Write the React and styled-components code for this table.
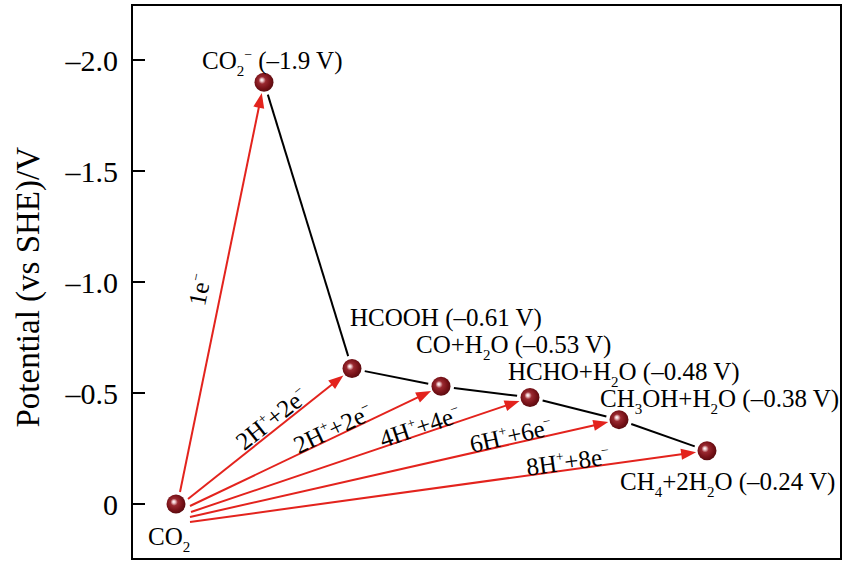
import styled, { createGlobalStyle } from 'styled-components';

const GlobalStyle = createGlobalStyle`
  html, body {
    margin: 0;
    padding: 0;
    background: #ffffff;
  }
`;

const Figure = styled.div`
  display: flex;
  width: 863px;
  height: 566px;
  background: #fff;
  font-family: 'Liberation Serif', 'Times New Roman', serif;
  color: #000;
`;

const AxisTitle = styled.div`
  width: 56px;
  display: flex;
  align-items: center;
  justify-content: center;
  padding-top: 8px;
  box-sizing: border-box;

  span {
    writing-mode: vertical-rl;
    transform: rotate(180deg);
    font-size: 33px;
    line-height: 1;
    white-space: nowrap;
  }
`;

const Chart = styled.svg`
  display: block;
  flex: none;
  font-family: 'Liberation Serif', 'Times New Roman', serif;
`;

const TickLabel = styled.text`
  font-size: 30px;
  fill: #000;
  text-anchor: end;
`;

const Annotation = styled.text`
  font-size: 25px;
  fill: #000;
`;

const StepLabel = styled.text`
  font-size: 25px;
  fill: #000;
  text-anchor: middle;
`;

const RED = '#e3231d';
const R = 9.5;

const y = (v) => 504 + v * 222;

const ticks = [0, -0.5, -1.0, -1.5, -2.0];

const species = {
  co2: { x: 176, v: 0 },
  co2r: { x: 264, v: -1.9 },
  hcooh: { x: 352, v: -0.61 },
  co: { x: 441, v: -0.53 },
  hcho: { x: 530, v: -0.48 },
  ch3oh: { x: 619, v: -0.38 },
  ch4: { x: 707, v: -0.24 },
};

const electrons = (n) => [[`${n}H`], ['+', 'sup'], [`+${n}e`], ['−', 'sup']];

// arrows out of CO2, each with its own start point and label centre
const steps = [
  { to: 'co2r', from: [180, 492], label: [['1e'], ['−', 'sup']], center: [200, 290] },
  { to: 'hcooh', from: [188, 499], label: electrons(2), center: [272, 419] },
  { to: 'co', from: [190, 506], label: electrons(2), center: [333, 429] },
  { to: 'hcho', from: [191, 512], label: electrons(4), center: [420, 427] },
  { to: 'ch3oh', from: [190, 517], label: electrons(6), center: [511, 436] },
  { to: 'ch4', from: [190, 522], label: electrons(8), center: [568, 462] },
];

const annotations = [
  { x: 202, y: 69, parts: [['CO'], ['2', 'sub'], ['−', 'sup'], [' (–1.9 V)']] },
  { x: 350, y: 326, parts: [['HCOOH (–0.61 V)']] },
  { x: 416, y: 353, parts: [['CO+H'], ['2', 'sub'], ['O (–0.53 V)']] },
  { x: 508, y: 380, parts: [['HCHO+H'], ['2', 'sub'], ['O (–0.48 V)']] },
  { x: 600, y: 407, parts: [['CH'], ['3', 'sub'], ['OH+H'], ['2', 'sub'], ['O (–0.38 V)']] },
  { x: 620, y: 490, parts: [['CH'], ['4', 'sub'], ['+2H'], ['2', 'sub'], ['O (–0.24 V)']] },
  { x: 148, y: 545, parts: [['CO'], ['2', 'sub']] },
];

const chain = ['co2r', 'hcooh', 'co', 'hcho', 'ch3oh', 'ch4'];

function Chem({ parts }) {
  // dy is relative, so each script part is undone by the next one
  let shift = 0;
  return parts.map(([text, kind], i) => {
    let target = 0;
    let size;
    if (kind === 'sub') {
      target = 7;
      size = '0.6em';
    } else if (kind === 'sup') {
      target = -10;
      size = '0.55em';
    }
    const dy = target - shift;
    shift = target;
    return (
      <tspan key={i} dy={dy} fontSize={size}>
        {text}
      </tspan>
    );
  });
}

function Ball({ cx, cy }) {
  return <circle cx={cx} cy={cy} r={R} fill="url(#ball)" />;
}

function Arrow({ from, to, step }) {
  const [x1, y1] = from;
  const dx = to.x - x1;
  const dy = to.y - y1;
  const len = Math.hypot(dx, dy);
  const ux = dx / len;
  const uy = dy / len;
  const tipX = to.x - ux * (R + 1.5);
  const tipY = to.y - uy * (R + 1.5);
  const head = 15;
  const half = 5.5;
  const bx = tipX - ux * head;
  const by = tipY - uy * head;
  const pts = `${tipX},${tipY} ${bx - uy * half},${by + ux * half} ${bx + uy * half},${by - ux * half}`;
  const angle = (Math.atan2(dy, dx) * 180) / Math.PI;
  const [mx, my] = step.center;
  return (
    <g>
      <line x1={x1} y1={y1} x2={bx + ux * 2} y2={by + uy * 2} stroke={RED} strokeWidth="2" />
      <polygon points={pts} fill={RED} />
      <StepLabel transform={`translate(${mx} ${my}) rotate(${angle})`} y="8">
        <Chem parts={step.label} />
      </StepLabel>
    </g>
  );
}

export default function App() {
  const pos = (k) => ({ x: species[k].x, y: y(species[k].v) });

  return (
    <>
      <GlobalStyle />
      <Figure>
        <AxisTitle>
          <span>Potential (vs SHE)/V</span>
        </AxisTitle>
        <Chart width="807" height="566" viewBox="56 0 807 566">
          <defs>
            <radialGradient id="ball" cx="0.45" cy="0.45" r="0.6" fx="0.38" fy="0.38">
              <stop offset="0" stopColor="#ffffff" />
              <stop offset="0.12" stopColor="#efc9cc" />
              <stop offset="0.32" stopColor="#9a2930" />
              <stop offset="0.7" stopColor="#761117" />
              <stop offset="1" stopColor="#520a0e" />
            </radialGradient>
          </defs>

          <rect x="132" y="5" width="709" height="554" fill="none" stroke="#000" strokeWidth="2" />
          {ticks.map((t) => (
            <g key={t}>
              <line x1="132" x2="145" y1={y(t)} y2={y(t)} stroke="#000" strokeWidth="2" />
              <TickLabel x="118" y={y(t) + 11}>
                {t === 0 ? '0' : '–' + Math.abs(t).toFixed(1)}
              </TickLabel>
            </g>
          ))}

          {chain.slice(1).map((k, i) => {
            const a = pos(chain[i]);
            const b = pos(k);
            const len = Math.hypot(b.x - a.x, b.y - a.y);
            const ux = (b.x - a.x) / len;
            const uy = (b.y - a.y) / len;
            const gap = 13;
            return (
              <line
                key={k}
                x1={a.x + ux * gap}
                y1={a.y + uy * gap}
                x2={b.x - ux * gap}
                y2={b.y - uy * gap}
                stroke="#000"
                strokeWidth="2"
              />
            );
          })}

          {steps.map((s) => (
            <Arrow key={s.to} from={s.from} to={pos(s.to)} step={s} />
          ))}

          {Object.keys(species).map((k) => {
            const p = pos(k);
            return <Ball key={k} cx={p.x} cy={p.y} />;
          })}

          {annotations.map((a, i) => (
            <Annotation key={i} x={a.x} y={a.y}>
              <Chem parts={a.parts} />
            </Annotation>
          ))}
        </Chart>
      </Figure>
    </>
  );
}
